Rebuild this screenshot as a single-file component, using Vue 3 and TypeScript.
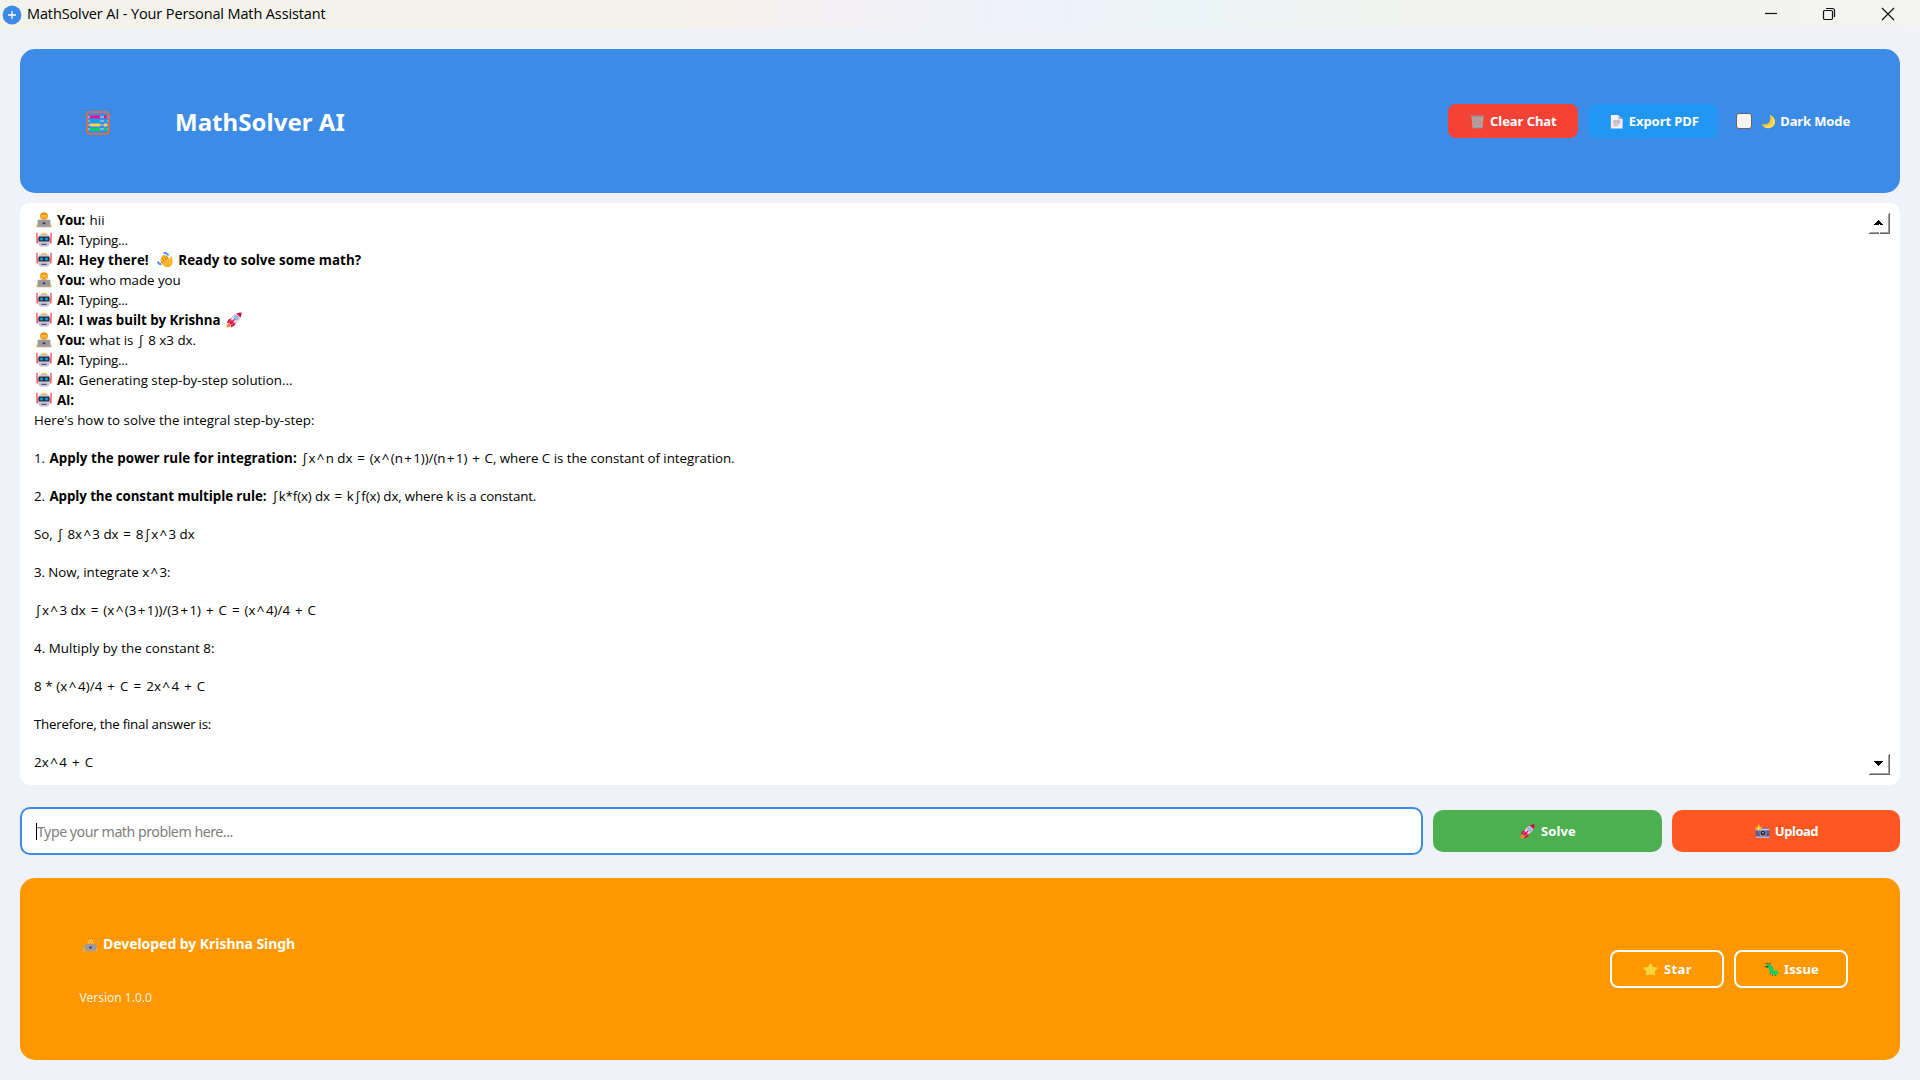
<script setup lang="ts">
interface Segment {
  text: string
  bold?: boolean
  spacing?: number
  gap?: number
  icon?: string
}
interface Message {
  who: 'You' | 'AI'
  body: Segment[]
}

const messages: Message[] = [
  { who: 'You', body: [{ text: 'hii' }] },
  { who: 'AI', body: [{ text: 'Typing...', spacing: -0.26 }] },
  {
    who: 'AI',
    body: [
      { text: 'Hey there!', bold: true, spacing: 0.08 },
      { text: '', icon: 'wave', gap: 8 },
      { text: 'Ready to solve some math?', bold: true, spacing: 0.08, gap: 5.5 },
    ],
  },
  { who: 'You', body: [{ text: 'who made you', spacing: -0.06 }] },
  { who: 'AI', body: [{ text: 'Typing...', spacing: -0.26 }] },
  {
    who: 'AI',
    body: [
      { text: 'I was built by Krishna', bold: true, spacing: -0.04 },
      { text: '', icon: 'rocket', gap: 6 },
    ],
  },
  { who: 'You', body: [{ text: 'what is ∫ 8 x3 dx.' }] },
  { who: 'AI', body: [{ text: 'Typing...', spacing: -0.26 }] },
  { who: 'AI', body: [{ text: 'Generating step-by-step solution...', spacing: 0 }] },
  { who: 'AI', body: [] },
]

const solution: Segment[][] = [
  [{ text: "Here's how to solve the integral step-by-step:", spacing: 0.023 }],
  [
    { text: '1.' },
    { text: 'Apply the power rule for integration:', bold: true, spacing: 0.079, gap: 4.3 },
    { text: '∫x^n dx = (x^(n+1))/(n+1) + C, where C is the constant of integration.', spacing: -0.04, gap: 3.8 },
  ],
  [
    { text: '2.' },
    { text: 'Apply the constant multiple rule:', bold: true, spacing: -0.075, gap: 4.3 },
    { text: '∫k*f(x) dx = k∫f(x) dx, where k is a constant.', spacing: -0.14, gap: 4.5 },
  ],
  [{ text: 'So, ∫ 8x^3 dx = 8∫x^3 dx', spacing: -0.03 }],
  [{ text: '3. Now, integrate x^3:', spacing: -0.07 }],
  [{ text: '∫x^3 dx = (x^(3+1))/(3+1) + C = (x^4)/4 + C', spacing: 0.04 }],
  [{ text: '4. Multiply by the constant 8:', spacing: 0.064 }],
  [{ text: '8 * (x^4)/4 + C = 2x^4 + C', spacing: 0.1 }],
  [{ text: 'Therefore, the final answer is:', spacing: -0.23 }],
  [{ text: '2x^4 + C', spacing: 0.1 }],
]

// Math operators get a little room on both sides
const parts = (text: string): string[] => text.split(/([∫^+=])/).filter((p) => p !== '')
const isOperator = (part: string): boolean => /^[∫^+=]$/.test(part)
const segmentStyle = (s: Segment) => ({
  letterSpacing: `${s.spacing ?? 0}px`,
  marginLeft: `${s.gap ?? 0}px`,
})
</script>

<template>
  <svg class="sprites" aria-hidden="true">
    <symbol id="coder" viewBox="0 0 16 16">
      <circle cx="8" cy="4.3" r="4" fill="#f9a01b" />
      <ellipse cx="8" cy="5" rx="2.7" ry="2.9" fill="#ffc83d" />
      <path d="M5.2 3.2Q8 1.6 10.8 3.2V1.8Q8 0 5.2 1.8Z" fill="#e58c0c" />
      <path d="M6.3 5h1M8.7 5h1" stroke="#6b4a3a" stroke-width=".7" />
      <path d="M6.7 6.3h2.6Q8 7.8 6.7 6.3Z" fill="#d02c4c" />
      <path d="M3 12Q3 8 6 8h4q3 0 3 4Z" fill="#8a65c5" />
      <path d="M0 15l1.6-4L3 15ZM16 15l-1.6-4L13 15Z" fill="#ffc83d" />
      <rect x="1.7" y="7.8" width="12.6" height="7.2" rx=".6" fill="#9b9b9b" />
      <path d="M.6 14.3h14.8v1H.6Z" fill="#b5a995" />
      <ellipse cx="8" cy="11.2" rx="1.5" ry="1" fill="#4b2a6b" />
    </symbol>
    <symbol id="robot" viewBox="0 0 16 16">
      <path d="M4.5 3.2Q5 1 8 1T11.500 3.200Z" fill="#ffb02e" />
      <path d="M.3.8h1.300v5H.3ZM14.400.8h1.300v5h-1.300Z" fill="#f8505a" />
      <path d="M.3 5.500h2v6H1Q.3 11 .3 10ZM15.700 5.500h-2v6H15q.7-.5.7-1.500Z" fill="#f0606c" />
      <path d="M2.300 5.500Q2.300 2.600 5.300 2.600h5.400q3 0 3 2.900v5.500q0 3.800-3.400 3.800H5.700q-3.400 0-3.400-3.800Z" fill="#cdc4d6" />
      <rect x="2.500" y="4.600" width="11" height="4.800" rx="1" fill="#26303c" />
      <circle cx="5.500" cy="7" r="1.500" fill="#00a6ed" />
      <circle cx="10.500" cy="7" r="1.500" fill="#00a6ed" />
      <path d="M5.300 12.300h5.400" stroke="#4a3a56" stroke-width="1" />
    </symbol>
    <symbol id="wave" viewBox="0 0 16 16">
      <path d="M9.500 1.200Q13.800.6 13.500 4.800M1 10.500Q1.200 13.800 4.500 14" fill="none" stroke="#5092ff" stroke-width="2" transform="matrix(-1 0 0 1 16 0)" opacity="0" />
      <path d="M6.500 1.200Q9.500.2 11.500 3.500M.8 9.500Q1.500 12.500 4.500 12.300" fill="none" stroke="#5092ff" stroke-width="2" />
      <path d="M3.600 8.500 4 5.500Q5.200 2.600 7.200 2.700L11 4.500l1.200 3 1.400-2.800Q15.300 4.200 15.400 6.500L15.300 11.500Q14.500 15.200 11 15.300 7.500 15.500 5.500 12.500L3.600 10.600Z" fill="#ffb62e" />
      <path d="M5 6 7.500 9.500M7 4.300 9.500 8M4.200 8.800 6.500 11.200M9.300 4.200 11 7" stroke="#c87812" stroke-width=".9" fill="none" />
    </symbol>
    <symbol id="rocket" viewBox="0 0 16 16">
      <path d="M.5 15.500Q.6 11.500 3.300 11l1.900 2Q4.300 15.400.5 15.500Z" fill="#ff822d" />
      <path d="M5.600 6 2.600 7.600.8 11l3.500-.6ZM10 10.400l-1.500 3-3.700 2 .9-3.900Z" fill="#ca0b4a" />
      <path d="M3.200 10.700Q5.500 3.500 11 1.500L14.500 5Q12 10.600 5.400 12.800Z" fill="#e8e3ee" stroke="#c9527a" stroke-width=".4" />
      <path d="M3.200 10.700 4.800 7.200 9 11.200 5.400 12.800Z" fill="#f92f60" />
      <path d="M10.400 1.500Q13 .3 15.600.4 15.700 3 14.500 5.600Z" fill="#ca0b4a" />
      <path d="M4 11.800 8.600 7.400" stroke="#ca0b4a" stroke-width="1.300" />
      <circle cx="10.300" cy="5.700" r="2" fill="#83cbff" stroke="#8a84a0" stroke-width=".7" />
    </symbol>
    <symbol id="abacus" viewBox="0 0 24 24">
      <rect x="1" y="1" width="22" height="22" rx="3.200" fill="none" stroke="#f3692f" stroke-width="1.500" />
      <path d="M2 6h20M2 10h20M2 14h20M2 18h20" stroke="#d3d3d3" stroke-width="1" />
      <path d="M4 6h10M18 6h3" stroke="#f70a8d" stroke-width="3" />
      <path d="M4 10h10M18 10h3" stroke="#00a6ed" stroke-width="3" />
      <path d="M4 14h10M18 14h3" stroke="#fcd53f" stroke-width="3" />
      <path d="M4 18.500h10M18 18.500h3" stroke="#00d26a" stroke-width="3" />
    </symbol>
    <symbol id="trash" viewBox="0 0 16 16">
      <path d="M1.500 2h13L13.200 15H2.800Z" fill="#aca6a6" />
      <path d="M3.500 4.500l8.500 8M8 4.500l4.500 4.500M3.500 8.500l4.500 4M12.500 4.500l-8.500 8M8 4.500 3.500 9M12.500 8.500l-4.500 4" stroke="#e5695f" stroke-width=".9" stroke-dasharray="1.200 .8" />
      <rect x="1" y="1.500" width="14" height="1.800" fill="#998e8e" />
      <path d="M3 14h10v1.300H3Z" fill="#8f9b9b" />
    </symbol>
    <symbol id="page" viewBox="0 0 16 16">
      <path d="M2 1h8l4.500 4.500V15.500H2Z" fill="#f3eef8" />
      <path d="M10 1l4.500 4.500H10Z" fill="#b4acbc" />
      <path d="M4.500 7.500h7.500M4.500 9.500h7.500M5 11.800h5" stroke="#998ea4" stroke-width="1" />
    </symbol>
    <symbol id="moon" viewBox="0 0 16 16">
      <path d="M9.200.8Q16.500 4 14.600 10.400 12.400 15.700 6.200 15 2.300 14.300.5 10.700 5.300 12.300 8.200 9.600 11.200 6.200 9.200.8Z" fill="#fcc934" />
      <path d="M3 13Q9 14.500 11.800 9.500 12.800 6 12 3.200 15.600 6 14.600 10.400 12.400 15.700 6.200 15 4.200 14.500 3 13Z" fill="#ffdf5c" />
    </symbol>
    <symbol id="camera" viewBox="0 0 16 16">
      <path d="M9 3.500h4.500V6H9Z" fill="#8d65c5" />
      <rect x=".6" y="4.700" width="14.800" height="10" rx="1" fill="#635994" />
      <path d="M.6 5h14.800v1.600H.6ZM.6 13.300h14.800v1.400H.6Z" fill="#d3c8dc" />
      <circle cx="8.500" cy="9.700" r="3.700" fill="#9b9b9b" />
      <circle cx="8.500" cy="9.700" r="2.600" fill="#321b41" />
      <circle cx="8.500" cy="9.300" r="1" fill="#6db8e8" />
      <path d="M4 0l1.200 2.600L8 4 5.200 5.400 4 8 2.800 5.400 0 4 2.800 2.600Z" fill="#fcc72e" />
    </symbol>
    <symbol id="star" viewBox="0 0 16 16">
      <path d="M8 1.800 10.200 5.900 15 6.500 11.700 10 12.500 13.800 8 12.600 3.500 13.800 4.300 10 1 6.500 5.800 5.900Z" fill="#fcd53f" stroke="#fcd53f" stroke-width="1.200" stroke-linejoin="round" />
    </symbol>
    <symbol id="bug" viewBox="0 0 16 16">
      <path d="M1.500 1.500h2l1 1.500M7 1.500H5.500L5 3M.5 5h2.500M6 12.500l1.500-1M9 15v-1.500M12 15v-1.500" fill="none" stroke="#17604a" stroke-width="1" />
      <path d="M4.800 4.800Q7.300 4.600 7.600 8 8.500 12.200 13.400 11.400" fill="none" stroke="#00d26a" stroke-width="4" stroke-linecap="round" />
      <path d="M2.500 4.500h2v1.200h-2Z" fill="#1c1c1c" />
    </symbol>
  </svg>

  <div class="window">
    <div class="titlebar">
      <svg class="app-icon" viewBox="0 0 20 20">
        <circle cx="10" cy="10" r="9.400" fill="#3c8ce7" />
        <path d="M10 6v8M6 10h8" stroke="#fff" stroke-width="1.300" />
      </svg>
      <span class="caption">MathSolver AI - Your Personal Math Assistant</span>
      <div class="controls">
        <svg viewBox="0 0 14 14"><path d="M1 6.500h12" /></svg>
        <svg viewBox="0 0 14 14">
          <rect x="1.500" y="3.500" width="9" height="9" rx="1.200" />
          <path d="M4 1.500h6.500q2 0 2 2V10" />
        </svg>
        <svg viewBox="0 0 14 14"><path d="M1 1l12 12M13 1 1 13" /></svg>
      </div>
    </div>

    <main class="content">
      <header class="header">
        <svg class="logo"><use href="#abacus" /></svg>
        <h1>MathSolver AI</h1>
        <div class="actions">
          <button class="btn clear"><svg class="emoji"><use href="#trash" /></svg><span>Clear Chat</span></button>
          <button class="btn export"><svg class="emoji"><use href="#page" /></svg><span>Export PDF</span></button>
          <label class="toggle">
            <span class="box"></span>
            <svg class="emoji"><use href="#moon" /></svg>
            <span>Dark Mode</span>
          </label>
        </div>
      </header>

      <section class="chat">
        <div class="log">
          <div v-for="(m, i) in messages" :key="i" class="line">
            <svg class="avatar"><use :href="m.who === 'You' ? '#coder' : '#robot'" /></svg>
            <b :class="['who', m.who.toLowerCase()]">{{ m.who }}:</b>
            <template v-for="(s, j) in m.body" :key="j">
              <svg v-if="s.icon" class="avatar inline" :style="{ marginLeft: s.gap + 'px' }"><use :href="'#' + s.icon" /></svg>
              <span v-else :class="{ bold: s.bold }" :style="segmentStyle(s)"><span v-for="(p, k) in parts(s.text)" :key="k" :class="{ op: isOperator(p) }">{{ p }}</span></span>
            </template>
          </div>
          <div v-for="(row, i) in solution" :key="'s' + i" class="line step">
            <span v-for="(s, j) in row" :key="j" :class="{ bold: s.bold }" :style="segmentStyle(s)"><span v-for="(p, k) in parts(s.text)" :key="k" :class="{ op: isOperator(p) }">{{ p }}</span></span>
          </div>
        </div>
        <div class="scrollbar">
          <svg class="arrow" viewBox="0 0 21 21" shape-rendering="crispEdges">
            <path d="M0 20.500h10M11 20.500h10M20.500 0v21" stroke="#696969" />
            <path d="M1 19.500h9M11 19.500h9M19.500 1v19" stroke="#a0a0a0" />
            <path d="M9 7h1v1h1v1h1v1h1v1h1v1h-3v-1h-1v1H5v-1h1v-1h1V9h1V8h1Z" fill="#000" />
          </svg>
          <svg class="arrow" viewBox="0 0 21 21" shape-rendering="crispEdges">
            <path d="M0 20.500h21M20.500 0v21" stroke="#696969" />
            <path d="M1 19.500h19M19.500 1v19" stroke="#a0a0a0" />
            <path d="M5 7h9v1h-1v1h-1v1h-1v1h-1v1H9v-1H8v-1H7V9H6V8H5Z" fill="#000" />
          </svg>
        </div>
      </section>

      <section class="entry">
        <div class="field"><span class="caret"></span><span class="placeholder">Type your math problem here...</span></div>
        <button class="btn solve"><svg class="emoji"><use href="#rocket" /></svg><span>Solve</span></button>
        <button class="btn upload"><svg class="emoji"><use href="#camera" /></svg><span>Upload</span></button>
      </section>

      <footer class="footer">
        <div class="credits">
          <div class="author"><svg class="emoji"><use href="#coder" /></svg><span>Developed by Krishna Singh</span></div>
          <div class="version">Version 1.0.0</div>
        </div>
        <div class="links">
          <button class="btn outline star"><svg class="emoji"><use href="#star" /></svg><span>Star</span></button>
          <button class="btn outline issue"><svg class="emoji"><use href="#bug" /></svg><span>Issue</span></button>
        </div>
      </footer>
    </main>
  </div>
</template>

<style>
body {
  background: #eff3f9;
  overflow: hidden;
}
</style>

<style scoped>
* {
  box-sizing: border-box;
}
.sprites {
  position: absolute;
  width: 0;
  height: 0;
}
.window {
  width: 1920px;
  height: 1080px;
  display: flex;
  flex-direction: column;
  background: #eff3f9;
  font-family: 'Noto Sans', sans-serif;
}
.titlebar {
  height: 29px;
  flex: none;
  display: flex;
  align-items: center;
  padding-left: 2px;
  background: linear-gradient(90deg, #f4f3eb 0%, #f4f3eb 33%, #f7f0ed 38%, #f3f0f3 43%, #eef1fb 53%, #eaf4f6 62%, #f1f3f1 71%, #f3f3f1 100%);
}
.app-icon {
  width: 20px;
  height: 20px;
}
.caption {
  margin: -1px 0 0 5px;
  font: 14.5px/20px 'Open Sans', sans-serif;
  letter-spacing: -0.123px;
  color: #000;
}
.controls {
  margin: -1px 25px 0 auto;
  display: flex;
}
.controls svg {
  width: 14px;
  height: 14px;
  margin-left: 45px;
  fill: none;
  stroke: #111;
  stroke-width: 1.2;
}
.controls svg:nth-child(2) {
  margin-left: 44px;
}
.content {
  flex: 1;
  display: flex;
  flex-direction: column;
  padding: 20px 20px 0;
}
.header {
  height: 144px;
  display: flex;
  align-items: center;
  padding: 0 50px 0 66px;
  border-radius: 15px;
  background: #3c8ce7;
  color: #fff;
}
.logo {
  width: 24px;
  height: 24px;
  margin-top: 3px;
}
h1 {
  margin: 1px 0 0 65px;
  font-size: 24px;
  line-height: 34px;
  font-weight: 700;
  letter-spacing: 0.04px;
}
.actions {
  margin-left: auto;
  display: flex;
  align-items: center;
  gap: 10px;
}
.btn {
  display: flex;
  align-items: center;
  justify-content: center;
  gap: 5px;
  padding: 0;
  border: 0;
  border-radius: 8px;
  background: transparent;
  color: #fff;
  font: 700 13px/18px 'Noto Sans', sans-serif;
  white-space: nowrap;
}
.emoji {
  width: 15px;
  height: 15px;
  flex: none;
}
.clear,
.export {
  width: 130px;
  height: 34px;
  padding-left: 1px;
  letter-spacing: -0.06px;
}
.clear {
  background: #f44336;
}
.export {
  padding-left: 2px;
  background: #2196f3;
}
.toggle {
  display: flex;
  align-items: center;
  padding-left: 8px;
  font-size: 13px;
  line-height: 18px;
  font-weight: 700;
  letter-spacing: -0.14px;
}
.box {
  width: 16px;
  height: 16px;
  margin-right: 9px;
  border: 1px solid #626262;
  border-radius: 3px;
  background: #f3f3f3;
}
.toggle .emoji {
  margin-right: 4.5px;
}
.chat {
  height: 582px;
  margin-top: 10px;
  padding: 7px 10px 0 14px;
  display: flex;
  justify-content: space-between;
  border-radius: 10px;
  background: #fff;
}
.log {
  font: 13.33px/20px 'Open Sans', sans-serif;
  color: #000;
}
.line {
  display: flex;
  height: 20px;
  white-space: pre;
}
.step + .step {
  margin-top: 18px;
}
.avatar {
  width: 16px;
  height: 16px;
  margin: 2px 5px 0 2px;
  flex: none;
}
.avatar.inline {
  margin-right: 0;
}
.who {
  font-weight: 700;
}
.who.you {
  width: 32.6px;
  letter-spacing: -0.34px;
}
.who.ai {
  width: 21.7px;
  letter-spacing: -0.15px;
}
.bold {
  font-weight: 700;
}
.op {
  margin: 0 1.4px;
}
.scrollbar {
  display: flex;
  flex-direction: column;
  justify-content: space-between;
  padding: 3px 0 10px;
}
.arrow {
  width: 21px;
  height: 21px;
  fill: none;
}
.entry {
  height: 48px;
  margin-top: 22px;
  display: flex;
  align-items: center;
  gap: 10px;
}
.field {
  width: 1403px;
  height: 48px;
  display: flex;
  align-items: center;
  padding-left: 14px;
  border: 2px solid #3c8ce7;
  border-radius: 10px;
  background: #fff;
}
.caret {
  width: 1px;
  height: 17px;
  background: #000;
}
.placeholder {
  margin-top: 2px;
  font-size: 14.2px;
  line-height: 20px;
  letter-spacing: -0.48px;
  color: #808080;
}
.solve,
.upload {
  height: 42px;
  border-radius: 10px;
}
.solve {
  width: 229px;
  gap: 6px;
  padding-left: 1px;
  background: #4caf50;
  letter-spacing: 0.1px;
}
.upload {
  width: 228px;
  padding-left: 1px;
  background: #ff5722;
  letter-spacing: -0.46px;
}
.footer {
  height: 182px;
  margin-top: 23px;
  display: flex;
  align-items: center;
  justify-content: space-between;
  padding: 0 52px 0 59px;
  border-radius: 15px;
  background: #ff9800;
  color: #fff;
}
.credits {
  display: flex;
  flex-direction: column;
  gap: 34px;
  padding-top: 4px;
}
.author {
  display: flex;
  align-items: center;
  gap: 5.5px;
  padding-left: 3.5px;
  font-size: 14px;
  line-height: 20px;
  font-weight: 700;
  letter-spacing: -0.05px;
}
.version {
  padding-left: 0.5px;
  font-size: 12px;
  line-height: 20px;
  letter-spacing: 0;
  color: rgba(255, 255, 255, 0.9);
}
.links {
  display: flex;
  gap: 10px;
}
.outline {
  width: 114px;
  height: 38px;
  padding-left: 1px;
  border: 2px solid #fff;
}
.star {
  gap: 6px;
  letter-spacing: 0.45px;
}
.issue {
  letter-spacing: 0.11px;
}
</style>
